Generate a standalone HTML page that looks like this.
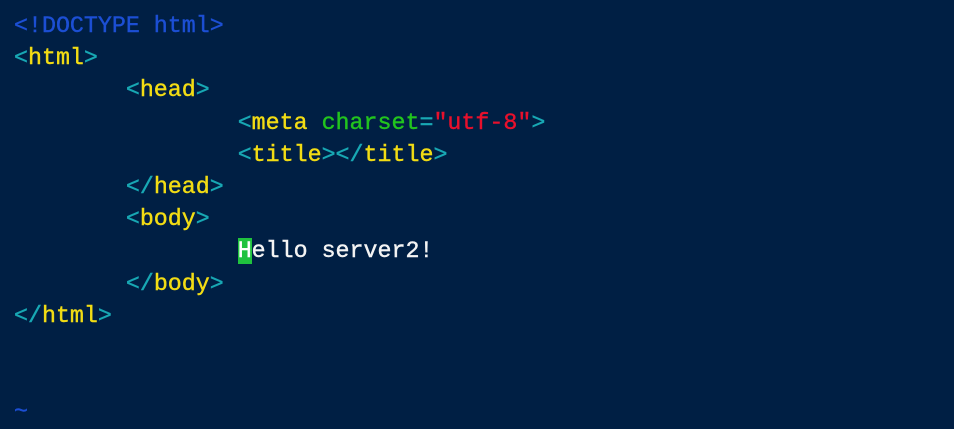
<!DOCTYPE html>
<html><head><meta charset="utf-8"><style>
html,body{margin:0;padding:0;background:#001f44;width:954px;height:426px;overflow:hidden}
pre{margin:0;position:absolute;left:14px;top:10px;font-family:"Liberation Mono",monospace;font-size:23.3px;line-height:32.2px;color:#f4f4f4;-webkit-text-stroke:0.4px currentColor}
.d{color:#1c4fd4}.b{color:#18a8b4}.t{color:#f2dc14}.a{color:#22c41e}.s{color:#e8102c}
.c{background:#20c23e;color:#fff}
</style></head><body><pre><span class="d">&lt;!DOCTYPE html&gt;</span>
<span class="b">&lt;</span><span class="t">html</span><span class="b">&gt;</span>
        <span class="b">&lt;</span><span class="t">head</span><span class="b">&gt;</span>
                <span class="b">&lt;</span><span class="t">meta</span> <span class="a">charset</span><span class="b">=</span><span class="s">"utf-8"</span><span class="b">&gt;</span>
                <span class="b">&lt;</span><span class="t">title</span><span class="b">&gt;&lt;/</span><span class="t">title</span><span class="b">&gt;</span>
        <span class="b">&lt;/</span><span class="t">head</span><span class="b">&gt;</span>
        <span class="b">&lt;</span><span class="t">body</span><span class="b">&gt;</span>
                <span class="c">H</span>ello server2!
        <span class="b">&lt;/</span><span class="t">body</span><span class="b">&gt;</span>
<span class="b">&lt;/</span><span class="t">html</span><span class="b">&gt;</span>


<span class="d">~</span></pre></body></html>
